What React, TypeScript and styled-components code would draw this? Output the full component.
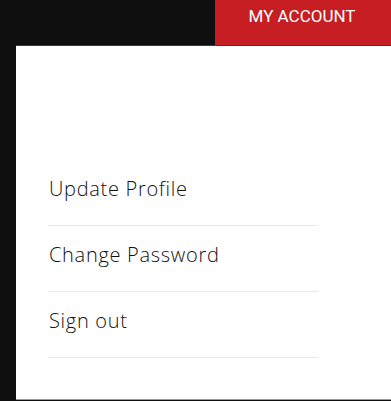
import React from "react";
import styled, { createGlobalStyle } from "styled-components";

const GlobalStyle = createGlobalStyle`
  html, body {
    margin: 0;
    padding: 0;
    background: #0f0f0f;
  }
`;

const items = ["Update Profile", "Change Password", "Sign out"];

const App = () => {
  return (
    <>
      <GlobalStyle />
      <Page>
        <TopBar>
          <AccountButton>MY ACCOUNT</AccountButton>
        </TopBar>
        <Panel>
          <MenuList>
            {items.map((label) => (
              <MenuItem key={label}>
                <MenuLink href="#">{label}</MenuLink>
              </MenuItem>
            ))}
          </MenuList>
        </Panel>
      </Page>
    </>
  );
};

export default App;

const Page = styled.div`
  width: 391px;
  height: 401px;
  display: flex;
  flex-direction: column;
  background: #0f0f0f;
`;

const TopBar = styled.div`
  height: 45px;
  display: flex;
  justify-content: flex-end;
`;

const AccountButton = styled.button`
  width: 176px;
  height: 45px;
  border: 0;
  background: #c61e22;
  color: #ffffff;
  font-family: Roboto, "Liberation Sans", sans-serif;
  font-size: 17px;
  font-weight: 400;
  padding: 0 2px 13px 0;
  cursor: pointer;
`;

const Panel = styled.div`
  margin-left: 16px;
  height: 355px;
  background: #ffffff;
  border-top: 1px solid #3a3b3c;
  border-bottom: 1px solid #9a9a9a;
  padding: 114px 0 0 32px;
  box-sizing: border-box;
`;

const MenuList = styled.ul`
  list-style: none;
  margin: 0;
  padding: 0;
  width: 270px;
`;

const MenuItem = styled.li`
  height: 66px;
  border-bottom: 1px solid #e8e8e8;
  box-sizing: border-box;
  display: flex;
  align-items: flex-start;
  padding-top: 15px;
`;

const MenuLink = styled.a`
  font-family: "Open Sans", "Noto Sans", sans-serif;
  font-size: 20px;
  font-weight: 300;
  letter-spacing: 0.7px;
  line-height: 27px;
  color: #111111;
  text-decoration: none;
  padding-left: 1px;
`;
